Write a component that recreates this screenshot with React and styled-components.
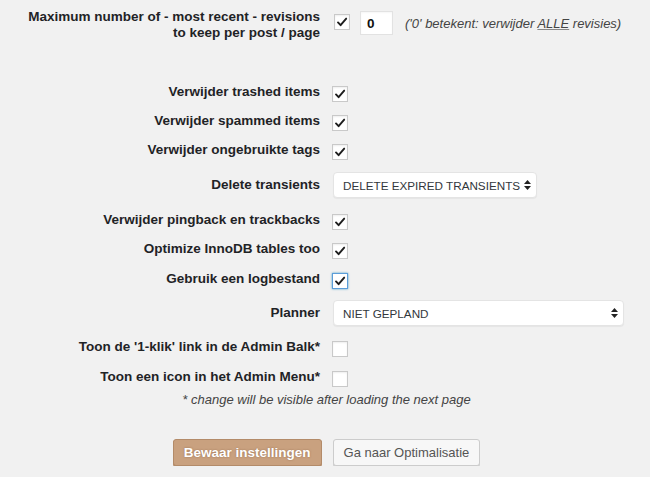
import React from 'react'
import styled, { createGlobalStyle } from 'styled-components'

const GlobalStyle = createGlobalStyle`
  html, body {
    margin: 0;
    padding: 0;
    background: #f1f1f1;
  }
  body {
    font-family: "Liberation Sans", Arial, sans-serif;
    color: #23282d;
    font-size: 13px;
  }
`

const Form = styled.form`
  display: flex;
  flex-direction: column;
  width: 650px;
  padding-top: 9px;
`

const Row = styled.div`
  display: grid;
  grid-template-columns: 320px 1fr;
  column-gap: 12px;
  align-items: ${p => (p.$top ? 'start' : 'center')};
  height: ${p => p.$h || 29}px;
  margin-top: ${p => p.$mt || 0}px;
`

const Label = styled.label`
  text-align: right;
  font-weight: bold;
  font-size: 13.5px;
  line-height: 16px;
  color: #1f2326;
`

const Field = styled.div`
  display: flex;
  align-items: ${p => (p.$top ? 'flex-start' : 'center')};
`

const Box = styled.span`
  box-sizing: border-box;
  display: inline-flex;
  align-items: center;
  justify-content: center;
  width: 16px;
  height: 16px;
  margin-top: ${p => p.$mt ?? 4}px;
  margin-left: ${p => p.$ml || 0}px;
  background: #fff;
  border: 1px solid ${p => (p.$focus ? '#5b9dd9' : '#c9c9c9')};
  box-shadow: ${p => (p.$focus ? '0 0 2px rgba(30,140,190,.8)' : 'inset 0 1px 2px rgba(0,0,0,.07)')};
`

const Check = () => (
  <svg width="12" height="12" viewBox="0 0 12 12">
    <path d="M2 6.4 L4.6 9.2 L10.2 2.6" fill="none" stroke="#1d1d1d" strokeWidth="1.9" strokeLinecap="round" strokeLinejoin="round" />
  </svg>
)

const Checkbox = ({ checked, focus, mt, ml }) => (
  <Box $focus={focus} $mt={mt} $ml={ml}>{checked && <Check />}</Box>
)

const NumberInput = styled.input`
  box-sizing: border-box;
  width: 33px;
  height: 24px;
  margin: 2px 0 0 10px;
  padding: 0 6px;
  border: 1px solid #e2e2e2;
  background: #fff;
  font-family: inherit;
  font-weight: bold;
  font-size: 13.5px;
  color: #111;
  box-shadow: inset 0 1px 2px rgba(0,0,0,.04);
  outline: none;
`

const Hint = styled.span`
  margin: 7px 0 0 12px;
  font-style: italic;
  line-height: 16px;
  color: #444;
  u {
    text-decoration-color: #888;
  }
`

const SelectWrap = styled.div`
  position: relative;
  width: ${p => p.$w}px;
  margin-left: 1px;
`

const Select = styled.select`
  appearance: none;
  box-sizing: border-box;
  width: 100%;
  height: 26px;
  padding: 0 12px 0 9px;
  border: 1px solid #e4e4e4;
  border-radius: 4px;
  background: #fff;
  box-shadow: 0 1px 1px rgba(0,0,0,.05);
  font-family: inherit;
  font-size: 11.7px;
  color: #32373c;
  outline: none;
`

const Arrows = styled.svg`
  position: absolute;
  right: 6px;
  top: 8px;
  pointer-events: none;
`

const Dropdown = ({ width, value }) => (
  <SelectWrap $w={width}>
    <Select defaultValue={value}>
      <option>{value}</option>
    </Select>
    <Arrows width="7" height="10" viewBox="0 0 7 10">
      <path d="M3.5 0 L7 4 H0 Z M3.5 10 L7 6 H0 Z" fill="#222" />
    </Arrows>
  </SelectWrap>
)

const Note = styled.p`
  margin: 0;
  height: 18px;
  line-height: 18px;
  text-align: center;
  font-style: italic;
  color: #444;
  padding-left: 3px;
`

const Buttons = styled.div`
  display: flex;
  justify-content: center;
  gap: 11px;
  margin-top: 30px;
  padding-left: 3px;
`

const Button = styled.button`
  box-sizing: border-box;
  height: 27px;
  padding: 0 10px;
  border-radius: 3px;
  font-family: inherit;
  cursor: pointer;
  ${p => p.$primary ? `
    background: #c9a17f;
    border: 1px solid #b38b69;
    color: #fff;
    font-weight: bold;
    font-size: 13.5px;
    text-shadow: 0 0 2px rgba(120,80,50,.6);
    box-shadow: 0 1px 0 #b38b69;
  ` : `
    background: #f7f7f7;
    border: 1px solid #cccccc;
    color: #555;
    font-size: 13px;
    box-shadow: 0 1px 0 #ccc;
  `}
`

const checks = [
  { label: 'Verwijder trashed items', h: 29, mt: 32 },
  { label: 'Verwijder spammed items', h: 29 },
  { label: 'Verwijder ongebruikte tags', h: 29 },
]

const checks2 = [
  { label: 'Verwijder pingback en trackbacks', h: 28 },
  { label: 'Optimize InnoDB tables too', h: 30 },
  { label: 'Gebruik een logbestand', h: 30, focus: true },
]

const App = () => (
  <>
    <GlobalStyle />
    <Form onSubmit={e => e.preventDefault()}>
      <Row $top $h={36}>
        <Label>Maximum number of - most recent - revisions<br />to keep per post / page</Label>
        <Field $top>
          <Checkbox checked mt={5} ml={2} />
          <NumberInput type="text" defaultValue="0" />
          <Hint>('0' betekent: verwijder <u>ALLE</u> revisies)</Hint>
        </Field>
      </Row>

      {checks.map(c => (
        <Row key={c.label} $h={c.h} $mt={c.mt}>
          <Label>{c.label}</Label>
          <Field><Checkbox checked /></Field>
        </Row>
      ))}

      <Row $h={42}>
        <Label>Delete transients</Label>
        <Field><Dropdown width={204} value="DELETE EXPIRED TRANSIENTS" /></Field>
      </Row>

      {checks2.map(c => (
        <Row key={c.label} $h={c.h}>
          <Label>{c.label}</Label>
          <Field><Checkbox checked focus={c.focus} /></Field>
        </Row>
      ))}

      <Row $h={38}>
        <Label>Planner</Label>
        <Field><Dropdown width={291} value="NIET GEPLAND" /></Field>
      </Row>

      <Row $h={30}>
        <Label>Toon de '1-klik' link in de Admin Balk*</Label>
        <Field><Checkbox /></Field>
      </Row>
      <Row $h={29}>
        <Label>Toon een icon in het Admin Menu*</Label>
        <Field><Checkbox /></Field>
      </Row>

      <Note>* change will be visible after loading the next page</Note>

      <Buttons>
        <Button type="submit" $primary>Bewaar instellingen</Button>
        <Button type="button">Ga naar Optimalisatie</Button>
      </Buttons>
    </Form>
  </>
)

export default App
